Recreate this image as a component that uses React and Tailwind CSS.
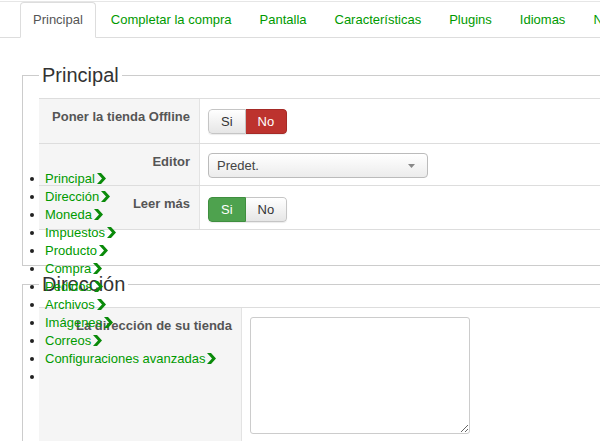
import React from "react";

const tabs = [
  "Principal",
  "Completar la compra",
  "Pantalla",
  "Características",
  "Plugins",
  "Idiomas",
  "Notificaciones",
];

const sections = [
  "Principal",
  "Dirección",
  "Moneda",
  "Impuestos",
  "Producto",
  "Compra",
  "Pedidos",
  "Archivos",
  "Imágenes",
  "Correos",
  "Configuraciones avanzadas",
];

function Chevron() {
  return (
    <svg width="9" height="11" viewBox="0 0 9 11" className="inline-block ml-[2px] align-[-1px]">
      <polygon points="0,0 4,0 9,5.5 4,11 0,11 5,5.5" fill="#0a8a0a" />
    </svg>
  );
}

// Si / No toggle pair
function YesNo({ value }) {
  const base = "px-3 py-[3px] leading-[17px] text-[13px] border";
  const off = "bg-gradient-to-b from-white to-[#e6e6e6] border-[#c5c5c5] text-[#333]";
  return (
    <div className="inline-flex rounded-[4px] overflow-hidden shadow-[0_1px_1px_rgba(0,0,0,0.08)]">
      <span
        className={`${base} rounded-l-[4px] ${
          value === "si" ? "bg-[#4ea24e] border-[#3f8e3f] text-white" : off
        }`}
      >
        Si
      </span>
      <span
        className={`${base} border-l-0 rounded-r-[4px] ${
          value === "no" ? "bg-[#bd332e] border-[#a52a26] text-white" : off
        }`}
      >
        No
      </span>
    </div>
  );
}

function Row({ label, labelWidth, height, children, padTop = "pt-[10px]" }) {
  return (
    <div className="flex border-t border-[#dddddd]" style={{ height }}>
      <div
        className="shrink-0 bg-[#f5f5f5] border-r border-[#e3e3e3] text-right pr-[9px] pt-[9px] text-[13px] leading-[18px] font-bold text-[#555]"
        style={{ width: labelWidth }}
      >
        {label}
      </div>
      <div className={`flex-1 pl-2 ${padTop}`}>{children}</div>
    </div>
  );
}

export default function App() {
  return (
    <div
      className="relative w-[600px] h-[441px] overflow-hidden bg-white pt-px"
      style={{ fontFamily: '"Liberation Sans", Arial, sans-serif' }}
    >
      <div className="h-px bg-[#e6e6e6]" />

      {/* tabs */}
      <ul className="flex pl-5 border-b border-[#dddddd] whitespace-nowrap">
        {tabs.map((t, i) => (
          <li key={t} className="-mb-px mr-[2px]">
            <span
              className={`block px-3 py-2 leading-[18px] text-[13px] border rounded-t-[4px] ${
                i === 0
                  ? "bg-white border-[#dddddd] border-b-white text-[#555]"
                  : "border-transparent text-[#009a00]"
              }`}
            >
              {t}
            </span>
          </li>
        ))}
      </ul>

      <fieldset className="ml-[22px] mt-[25px] w-[640px] border border-[#cccccc] px-4 pt-[11px] pb-[35px]">
        <legend className="px-[3px] text-[20px] leading-[24px] text-[#333]">Principal</legend>
        <div className="border-b border-[#dddddd]">
          <Row label="Poner la tienda Offline" labelWidth={161} height={45}>
            <YesNo value="no" />
          </Row>
          <Row label="Editor" labelWidth={161} height={42} padTop="pt-[9px]">
            <div className="relative w-[220px] h-[25px] rounded-[4px] border border-[#bbbbbb] bg-gradient-to-b from-white to-[#ececec] pl-2 text-[13px] leading-[23px] text-[#444]">
              Predet.
              <svg width="7" height="4" viewBox="0 0 7 4" className="absolute right-[12px] top-[10px]">
                <polygon points="0,0 7,0 3.5,4" fill="#888" />
              </svg>
            </div>
          </Row>
          <Row label="Leer más" labelWidth={161} height={44} padTop="pt-[11px]">
            <YesNo value="si" />
          </Row>
        </div>
      </fieldset>

      <fieldset className="ml-[22px] mt-[6px] w-[640px] border border-[#cccccc] px-4 pt-[11px] pb-4">
        <legend className="px-[3px] text-[20px] leading-[24px] text-[#333]">Dirección</legend>
        <Row label="La dirección de su tienda" labelWidth={203} height={150} padTop="pt-[9px]">
          <textarea className="block w-[220px] h-[117px] rounded-[3px] border border-[#cccccc] bg-white" />
        </Row>
      </fieldset>

      {/* section index list */}
      <ul className="absolute top-[170px] left-0 pl-[45px] list-disc text-[13px] leading-[18px] text-[#009a00] marker:text-[#222]">
        {sections.map((s) => (
          <li key={s} className="whitespace-nowrap">
            {s}
            <Chevron />
          </li>
        ))}
        <li>&nbsp;</li>
      </ul>
    </div>
  );
}
